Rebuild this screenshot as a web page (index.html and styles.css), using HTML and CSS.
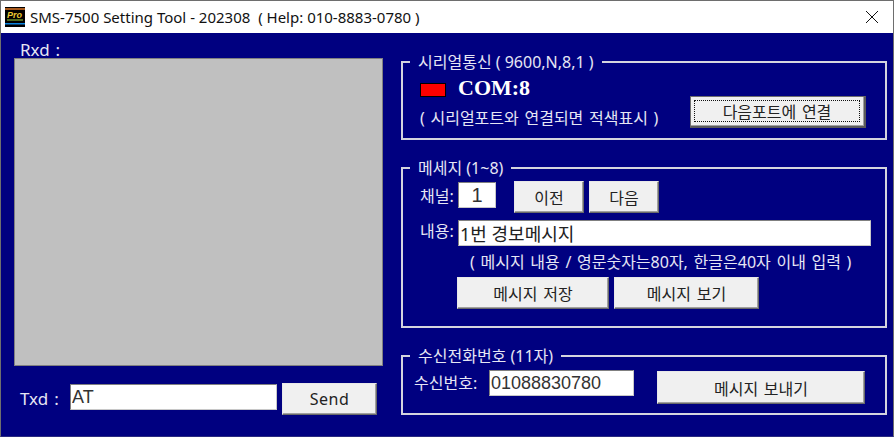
FILE: index.html
```html
<!DOCTYPE html>
<html lang="ko">
<head>
    <meta charset="UTF-8">
    <title>SMS-7500 Setting Tool</title>
    <link rel="stylesheet" href="styles.css">
</head>
<body>

<div class="window">
    <header class="titlebar">
        <svg class="app-icon" width="20" height="20" viewBox="0 0 20 20">
            <rect width="20" height="20" fill="#000"/>
            <rect y="1" width="20" height="2" fill="#a8591c"/>
            <rect y="16" width="20" height="1.5" fill="#0a84e0"/>
            <text x="2" y="11" class="app-icon-text">Pro</text>
            <rect x="2" y="12" width="16" height="2" fill="#4c6a1e"/>
        </svg>
        <span class="title">SMS-7500 Setting Tool - 202308&nbsp; ( Help: 010-8883-0780 )</span>
        <svg class="close-icon" width="14" height="14" viewBox="0 0 14 14">
            <path d="M1 1 L13 13 M13 1 L1 13" stroke="#111" stroke-width="1" fill="none"/>
        </svg>
    </header>

    <main class="content">
        <section class="terminal">
            <div class="rxd-label">Rxd :</div>
            <div class="rxd-box"></div>
            <div class="txd-row">
                <label class="txd-label">Txd :</label>
                <input class="field field-latin txd-input" type="text" value="AT">
                <button class="btn btn-send">Send</button>
            </div>
        </section>

        <section class="settings">
            <fieldset class="group group-serial">
                <legend>시리얼통신 ( 9600,N,8,1 )</legend>
                <div class="serial-info">
                    <div class="port-row">
                        <span class="led"></span>
                        <span class="port-name">COM:8</span>
                    </div>
                    <div class="note">( 시리얼포트와 연결되면 적색표시 )</div>
                </div>
                <button class="btn btn-next-port"><span class="focus-ring">다음포트에 연결</span></button>
            </fieldset>

            <fieldset class="group group-message">
                <legend>메세지 (1~8)</legend>
                <div class="row row-channel">
                    <label>채널:</label>
                    <input class="field field-latin channel-input" type="text" value="1">
                    <button class="btn btn-prev">이전</button>
                    <button class="btn btn-step">다음</button>
                </div>
                <div class="row row-body">
                    <label>내용:</label>
                    <input class="field body-input" type="text" value="1번 경보메시지">
                </div>
                <div class="hint">( 메시지 내용 / 영문숫자는80자, 한글은40자 이내 입력 )</div>
                <div class="row row-actions">
                    <button class="btn btn-save">메시지 저장</button>
                    <button class="btn btn-view">메시지 보기</button>
                </div>
            </fieldset>

            <fieldset class="group group-phone">
                <legend>수신전화번호 (11자)</legend>
                <label>수신번호:</label>
                <input class="field field-latin phone-input" type="text" value="01088830780">
                <button class="btn btn-send-message">메시지 보내기</button>
            </fieldset>
        </section>
    </main>
</div>

</body>
</html>
```

FILE: styles.css
```css
* {
    box-sizing: border-box;
}

html, body {
    margin: 0;
    height: 100%;
}

body {
    font-family: "Noto Sans", "Noto Sans CJK KR", sans-serif;
    font-size: 16px;
    word-spacing: 1.5px;
    color: #e6e6f4;
    overflow: hidden;
}

.window {
    height: 437px;
    display: flex;
    flex-direction: column;
    border: 1px solid #6e6e6e;
    border-bottom-color: #2a2a80;
    background-color: #000080;
}

.titlebar {
    height: 32px;
    flex: none;
    display: flex;
    align-items: center;
    padding: 0 14px 0 4px;
    background-color: #fff;
    color: #111;
    font-size: 15px;
    word-spacing: 0;
}

.app-icon {
    flex: none;
    margin-right: 5px;
}

.app-icon-text {
    font-family: "Liberation Sans", sans-serif;
    font-size: 9px;
    font-weight: bold;
    font-style: italic;
    fill: #e8c832;
}

.title {
    flex: 1;
    white-space: nowrap;
}

.content {
    flex: 1;
    display: flex;
    min-height: 0;
}

/* left side */
.terminal {
    width: 400px;
    flex: none;
    padding: 9px 0 0 13px;
}

.rxd-label, .txd-label {
    font-size: 17px;
    line-height: 16px;
}

.rxd-label {
    padding-left: 6px;
}

.rxd-box {
    width: 369px;
    height: 308px;
    background-color: #c0c0c0;
    border: 1px solid #808080;
}

.txd-row {
    display: flex;
    align-items: flex-start;
    margin-top: 17px;
}

.txd-label {
    width: 56px;
    padding: 8px 0 0 6px;
}

.txd-input {
    width: 207px;
    margin-top: 1px;
    font-size: 16px;
}

.btn-send {
    width: 95px;
    height: 32px;
    margin-left: 5px;
    font-size: 17px;
    letter-spacing: 0.5px;
}

/* right side */
.settings {
    flex: 1;
    display: flex;
    flex-direction: column;
    gap: 20px;
    padding: 21px 9px 0 0;
}

.group {
    margin: 0;
    min-width: 0;
    padding: 0 14px 0 7px;
    border: 2px solid #d4d4de;
}

.group legend {
    padding: 0 8px;
    line-height: 16px;
    font-size: 16px;
    word-spacing: 0;
}

.group-serial {
    height: 86px;
    display: flex;
    justify-content: space-between;
    align-items: flex-start;
}

.group-message {
    height: 168px;
}

.group-phone {
    height: 67px;
    display: flex;
    align-items: flex-start;
    padding: 6px 18px 0 11px;
}

.group-phone legend {
    margin-left: -4px;
}

.serial-info {
    padding: 6px 0 0 10px;
}

.port-row {
    display: flex;
    align-items: center;
    height: 24px;
}

.led {
    width: 26px;
    height: 14px;
    margin: 4px 12px 0 0;
    background-color: #ff0000;
    border: 1px solid #000;
}

.port-name {
    font-family: "Liberation Serif", serif;
    font-weight: bold;
    font-size: 22px;
    color: #fff;
}

.note {
    margin-top: 8px;
    line-height: 20px;
    white-space: nowrap;
}

.field {
    height: 26px;
    padding: 0 1px;
    background-color: #fff;
    border: 1px solid;
    border-color: #808080 #c8c8c8 #c8c8c8 #808080;
    color: #222;
    font-family: "Noto Sans", "Noto Sans CJK KR", sans-serif;
    font-size: 18px;
    outline: none;
}

.field-latin {
    font-family: "Liberation Sans", sans-serif;
    color: #333;
}

.btn {
    padding: 0;
    background-color: #f0f0f0;
    border: 1px solid;
    border-color: #e8e8e8 #6a6a6a #6a6a6a #e8e8e8;
    box-shadow: inset -1px -1px 0 #a0a0a0;
    color: #222;
    font-family: "Noto Sans", "Noto Sans CJK KR", sans-serif;
    font-size: 16px;
    word-spacing: 1.5px;
}

.btn-next-port {
    width: 176px;
    height: 32px;
    margin: 26px 5px 0 0;
    padding: 3px 4px 4px 3px;
    border: 2px solid;
    border-color: #6e6e6e #5a5a5a #5a5a5a #6e6e6e;
    border-top-width: 1px;
    border-left-width: 1px;
}

.focus-ring {
    display: flex;
    align-items: center;
    justify-content: center;
    height: 100%;
    border: 1px dotted #111;
}

.row {
    display: flex;
    align-items: flex-start;
    padding-left: 10px;
}

.row label {
    width: 38px;
    flex: none;
    padding-top: 5px;
    line-height: 20px;
}

.row-channel {
    padding-top: 5px;
}

.row-channel .field {
    margin-top: 1px;
}

.channel-input {
    width: 38px;
    font-size: 20px;
    text-align: center;
}

.btn-prev, .btn-step {
    width: 70px;
    height: 32px;
}

.btn-prev {
    margin-left: 18px;
}

.btn-step {
    margin-left: 5px;
}

.row-body {
    margin-top: 7px;
}

.row-body label {
    padding-top: 1px;
}

.body-input {
    width: 413px;
}

.hint {
    margin: 6px 0 0 60px;
    line-height: 20px;
    white-space: nowrap;
}

.row-actions {
    margin-top: 5px;
    padding-left: 47px;
    gap: 5px;
}

.btn-save {
    width: 152px;
    height: 32px;
}

.btn-view {
    width: 145px;
    height: 32px;
}

.group-phone label {
    width: 75px;
    flex: none;
    padding-top: 3px;
    line-height: 20px;
}

.phone-input {
    width: 145px;
}

.btn-send-message {
    width: 208px;
    height: 33px;
    margin-left: 23px;
    margin-top: 1px;
}
```
